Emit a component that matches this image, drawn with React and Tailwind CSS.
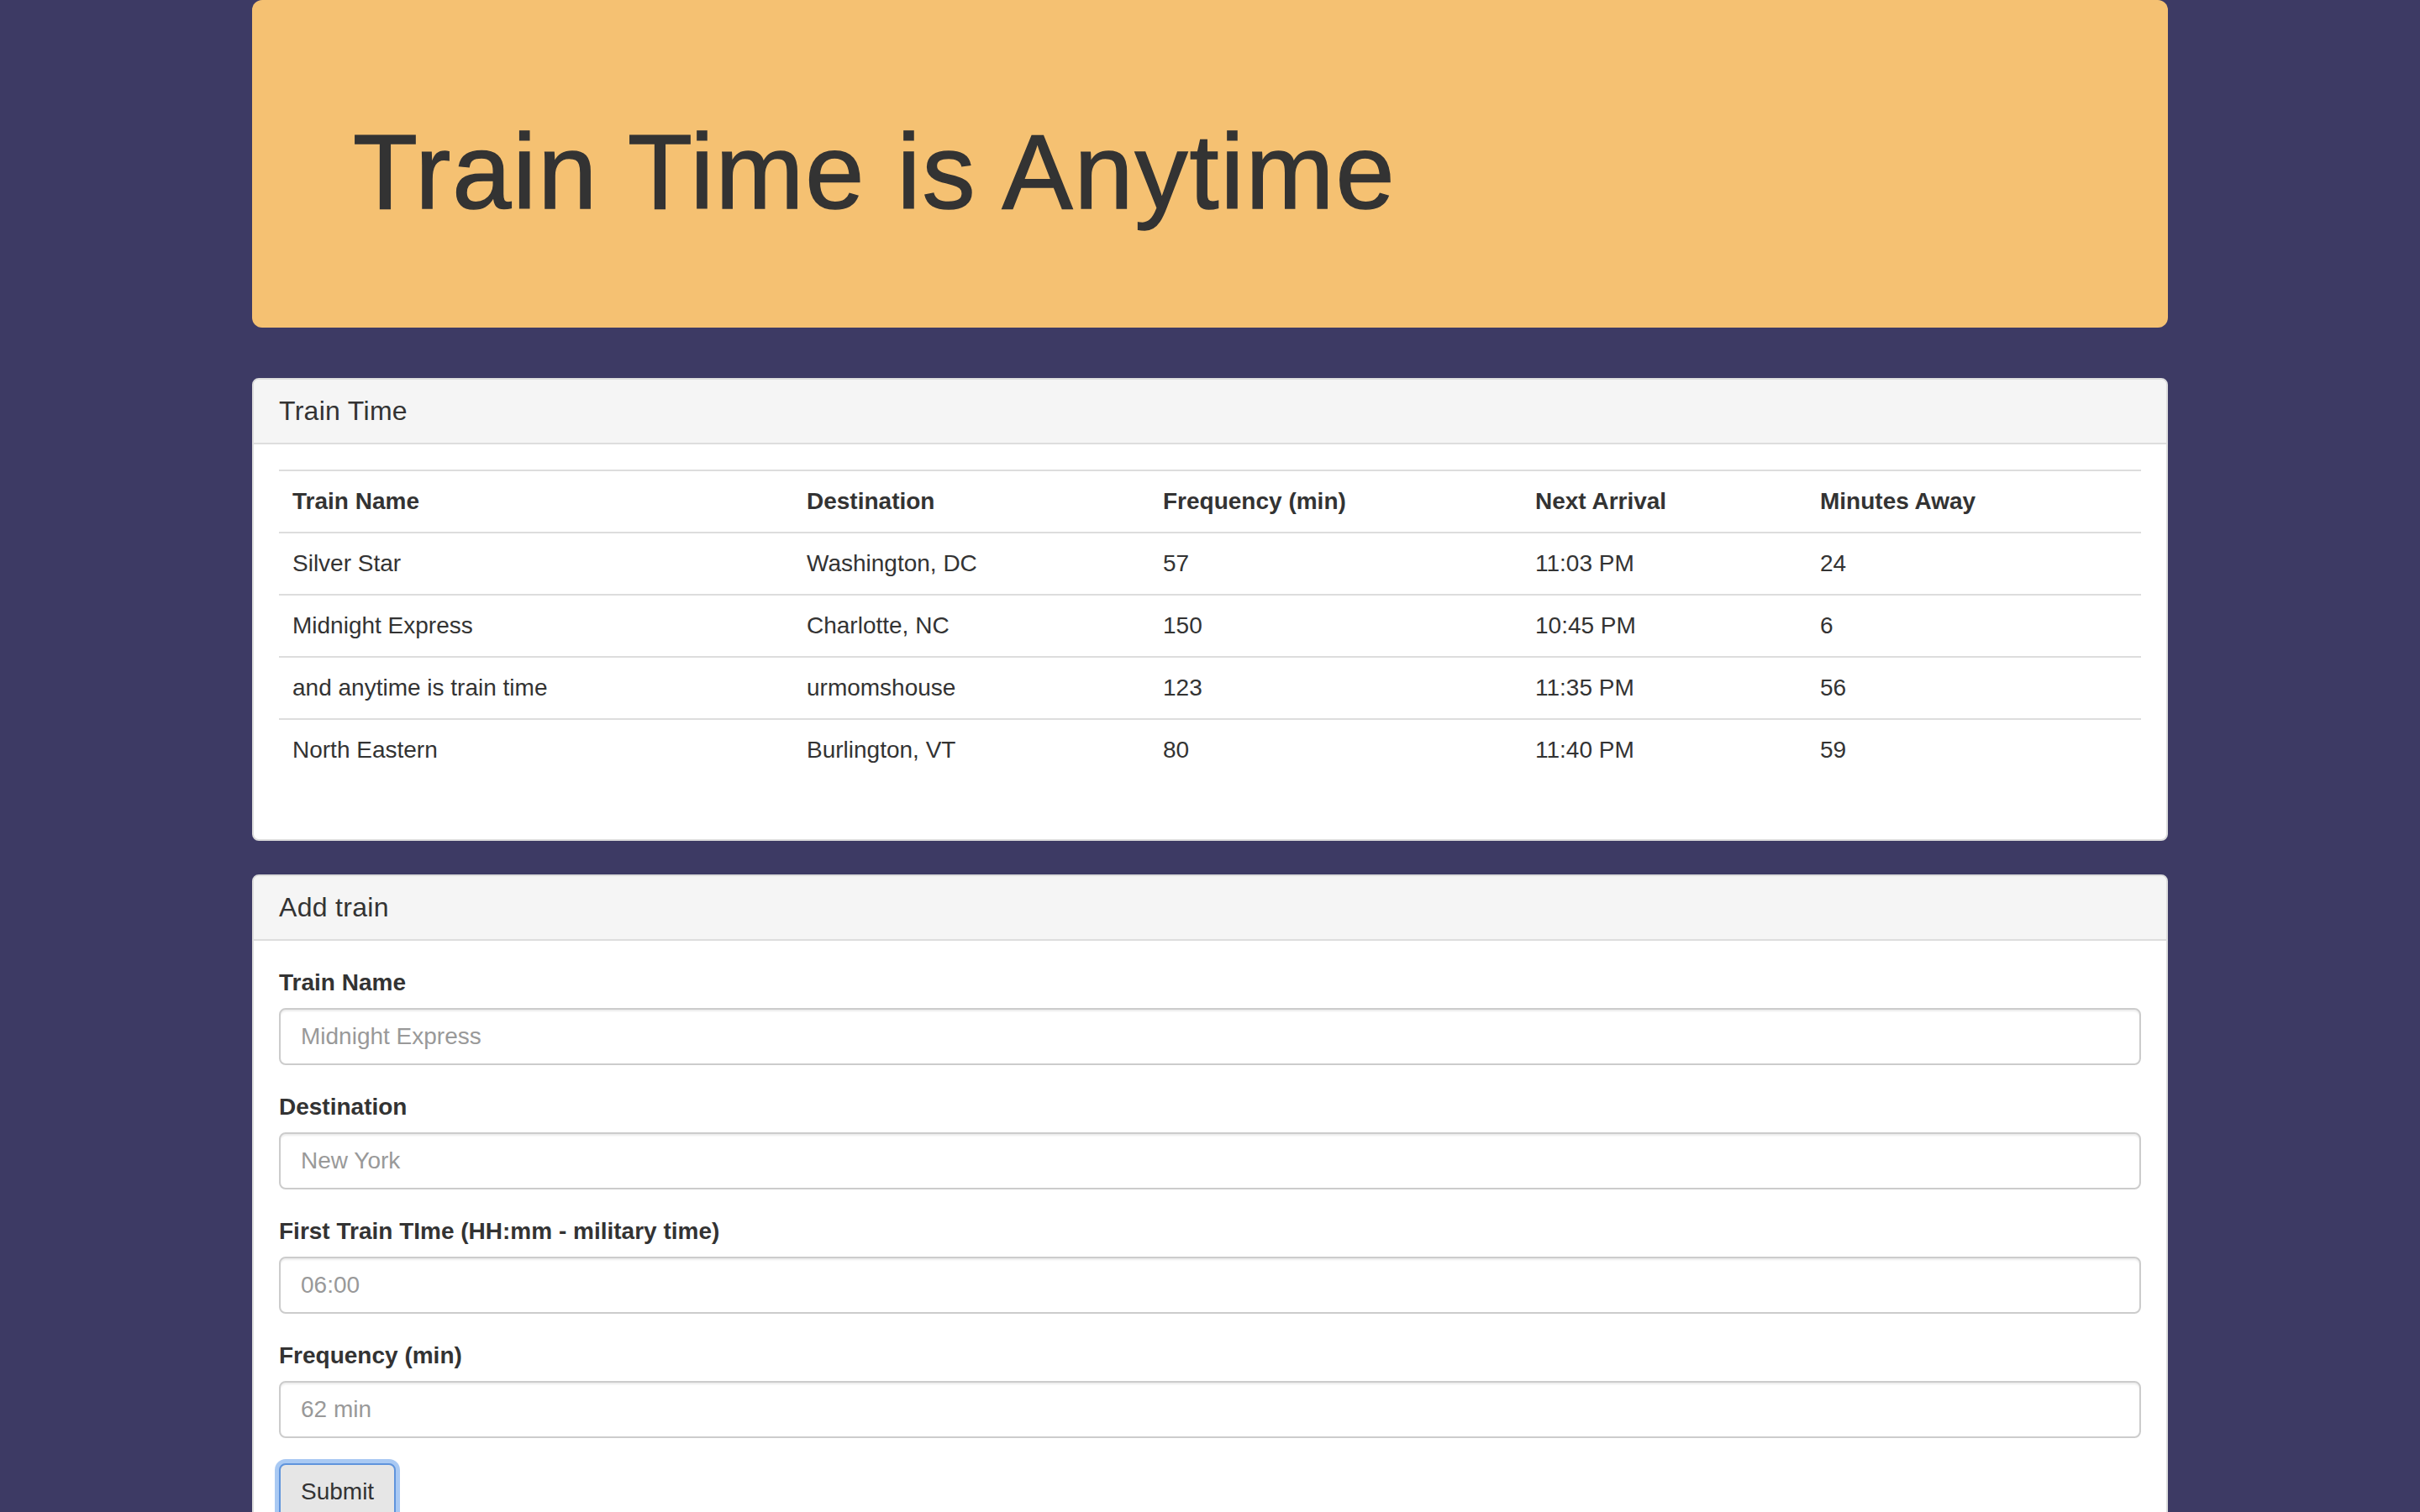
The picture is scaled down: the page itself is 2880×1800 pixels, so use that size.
import React from "react";

const trains = [
  { name: "Silver Star", dest: "Washington, DC", freq: "57", next: "11:03 PM", away: "24" },
  { name: "Midnight Express", dest: "Charlotte, NC", freq: "150", next: "10:45 PM", away: "6" },
  { name: "and anytime is train time", dest: "urmomshouse", freq: "123", next: "11:35 PM", away: "56" },
  { name: "North Eastern", dest: "Burlington, VT", freq: "80", next: "11:40 PM", away: "59" },
];

const fields = [
  { label: "Train Name", placeholder: "Midnight Express" },
  { label: "Destination", placeholder: "New York" },
  { label: "First Train TIme (HH:mm - military time)", placeholder: "06:00" },
  { label: "Frequency (min)", placeholder: "62 min" },
];

function PanelHeading({ children }) {
  return (
    <div className="px-[30px] py-[20px] bg-[#f5f5f5] border-b-2 border-[#ddd] rounded-t-[6px]">
      <h3 className="text-[32px] leading-[35px] font-normal tracking-[0.3px]">{children}</h3>
    </div>
  );
}

export default function App() {
  return (
    <div className="min-h-screen bg-[#3d3a64] text-[#333] font-['Liberation_Sans',Arial,sans-serif] text-[28px] leading-[40px]">
      <div className="w-[2280px] mx-auto">
        {/* jumbotron */}
        <div className="bg-[#f5c172] rounded-[12px] px-[120px] py-[96px] mb-[60px]">
          <h1 className="mt-[40px] mb-[20px] text-[126px] leading-[138px] font-normal tracking-[2px] [-webkit-text-stroke:1.5px_#333]">
            Train Time is Anytime
          </h1>
        </div>

        {/* schedule */}
        <div className="bg-white border-2 border-[#ddd] rounded-[8px] mb-[40px]">
          <PanelHeading>Train Time</PanelHeading>
          <div className="p-[30px]">
            <table className="w-full mb-[40px] border-collapse text-left">
              <tbody>
                <tr>
                  <th className="w-[612px] p-[16px] border-t-2 border-[#ddd] font-bold">Train Name</th>
                  <th className="w-[424px] p-[16px] border-t-2 border-[#ddd] font-bold">Destination</th>
                  <th className="w-[443px] p-[16px] border-t-2 border-[#ddd] font-bold">Frequency (min)</th>
                  <th className="w-[339px] p-[16px] border-t-2 border-[#ddd] font-bold">Next Arrival</th>
                  <th className="p-[16px] border-t-2 border-[#ddd] font-bold">Minutes Away</th>
                </tr>
                {trains.map((t) => (
                  <tr key={t.name}>
                    <td className="p-[16px] border-t-2 border-[#ddd]">{t.name}</td>
                    <td className="p-[16px] border-t-2 border-[#ddd]">{t.dest}</td>
                    <td className="p-[16px] border-t-2 border-[#ddd]">{t.freq}</td>
                    <td className="p-[16px] border-t-2 border-[#ddd]">{t.next}</td>
                    <td className="p-[16px] border-t-2 border-[#ddd]">{t.away}</td>
                  </tr>
                ))}
              </tbody>
            </table>
          </div>
        </div>

        {/* add train form */}
        <div className="bg-white border-2 border-[#ddd] rounded-[8px] mb-[40px]">
          <PanelHeading>Add train</PanelHeading>
          <form className="p-[30px]" onSubmit={(e) => e.preventDefault()}>
            {fields.map((f) => (
              <div key={f.label} className="mb-[30px]">
                <label className="block font-bold mb-[10px]">{f.label}</label>
                <input
                  type="text"
                  placeholder={f.placeholder}
                  className="block w-full h-[68px] px-[24px] py-[12px] text-[28px] text-[#555] bg-white border-2 border-[#ccc] rounded-[8px] shadow-[inset_0_2px_2px_rgba(0,0,0,0.075)] placeholder:text-[#999] outline-none"
                />
              </div>
            ))}
            <button
              type="submit"
              className="px-[24px] py-[12px] text-[28px] leading-[40px] text-[#333] bg-[#e6e6e6] border-2 border-[#5f94dc] rounded-[8px] shadow-[0_0_0_5px_#a9c9f3]"
            >
              Submit
            </button>
          </form>
        </div>
      </div>
    </div>
  );
}
